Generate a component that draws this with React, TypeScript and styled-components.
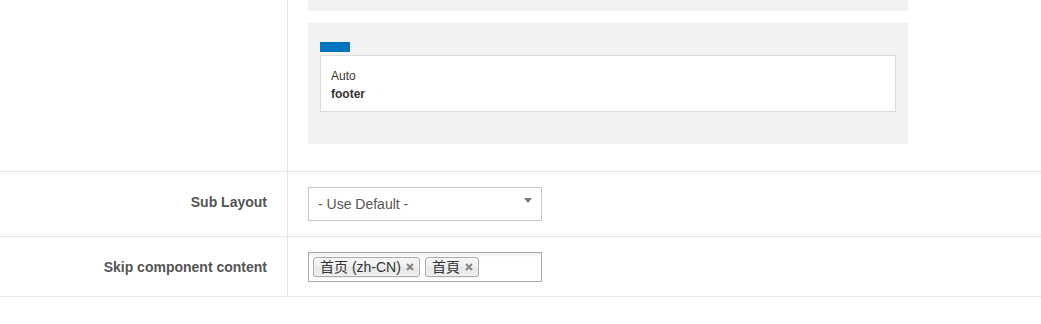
import React from "react";
import styled, { createGlobalStyle } from "styled-components";

const GlobalStyle = createGlobalStyle`
  body {
    margin: 0;
    background: #fff;
    font-family: "Liberation Sans", Arial, "Noto Sans CJK SC", sans-serif;
    color: #333;
  }
`;

const Form = styled.div`
  width: 1041px;
  display: flex;
  flex-direction: column;
`;

const Row = styled.div`
  display: grid;
  grid-template-columns: 288px 1fr;
  border-bottom: 1px solid #e5e5e5;
`;

const Label = styled.div<{ $lift?: number }>`
  border-right: 1px solid #e5e5e5;
  padding-right: 20px;
  padding-bottom: ${(p) => p.$lift ?? 0}px;
  display: flex;
  justify-content: flex-end;
  align-items: center;
  font-size: 14px;
  font-weight: bold;
  color: #555;
`;

const Control = styled.div<{ $pad: string }>`
  padding: ${(p) => p.$pad};
`;

const GrayBox = styled.div<{ $h?: number }>`
  width: 600px;
  background: #f2f2f2;
  box-sizing: border-box;
  height: ${(p) => (p.$h ? `${p.$h}px` : "auto")};
`;

const Stack = styled.div`
  display: flex;
  flex-direction: column;
  gap: 12px;
`;

const PositionBox = styled(GrayBox)`
  padding: 19px 12px 32px;
`;

const BlueBar = styled.div`
  width: 30px;
  height: 10px;
  background: #0075bf;
  margin-bottom: 3px;
`;

const Module = styled.div`
  border: 1px solid #dcdcdc;
  background: #fff;
  height: 57px;
  box-sizing: border-box;
  padding: 11px 10px 0;
  font-size: 12px;
  line-height: 18px;
  color: #333;
`;

const Bold = styled.div`
  font-weight: bold;
`;

const SelectBox = styled.div`
  width: 234px;
  height: 34px;
  box-sizing: border-box;
  border: 1px solid #c8c8c8;
  background: #fff;
  display: flex;
  align-items: center;
  justify-content: space-between;
  padding: 0 9px 0 9px;
  font-size: 14px;
  color: #555;
`;

const Arrow = styled.span`
  width: 0;
  height: 0;
  border-left: 4px solid transparent;
  border-right: 4px solid transparent;
  border-top: 5px solid #777;
  align-self: flex-start;
  margin-top: 10px;
`;

const TagInput = styled.div`
  width: 234px;
  height: 30px;
  box-sizing: border-box;
  border: 1px solid #aaa;
  background: linear-gradient(#eee 1%, #fff 15%);
  display: flex;
  align-items: center;
  gap: 5px;
  padding: 0 4px;
`;

const Tag = styled.span`
  display: inline-flex;
  align-items: center;
  gap: 5px;
  height: 20px;
  box-sizing: border-box;
  padding: 0 5px 0 6px;
  border: 1px solid #aaa;
  border-radius: 3px;
  background: linear-gradient(#f4f4f4 20%, #f0f0f0 50%, #e8e8e8 52%, #eee 100%);
  box-shadow: inset 0 0 2px #fff, 0 1px 0 rgba(0, 0, 0, 0.05);
  font-size: 14px;
  color: #333;
  line-height: 1;
`;

const Close = styled.svg`
  width: 8px;
  height: 8px;
  flex: none;
`;

const CloseIcon = () => (
  <Close viewBox="0 0 8 8">
    <path d="M1 1 L7 7 M7 1 L1 7" stroke="#888" strokeWidth="2.2" />
  </Close>
);

const tags = ["首页 (zh-CN)", "首頁"];

export default function App() {
  return (
    <>
      <GlobalStyle />
      <Form>
        <Row>
          <Label />
          <Control $pad="0 20px 27px">
            <Stack>
              <GrayBox $h={11} />
              <PositionBox>
                <BlueBar />
                <Module>
                  <div>Auto</div>
                  <Bold>footer</Bold>
                </Module>
              </PositionBox>
            </Stack>
          </Control>
        </Row>
        <Row>
          <Label $lift={4}>Sub Layout</Label>
          <Control $pad="15px 20px 15px">
            <SelectBox>
              - Use Default -
              <Arrow />
            </SelectBox>
          </Control>
        </Row>
        <Row>
          <Label>Skip component content</Label>
          <Control $pad="15px 20px 14px">
            <TagInput>
              {tags.map((t) => (
                <Tag key={t}>
                  {t}
                  <CloseIcon />
                </Tag>
              ))}
            </TagInput>
          </Control>
        </Row>
      </Form>
    </>
  );
}
